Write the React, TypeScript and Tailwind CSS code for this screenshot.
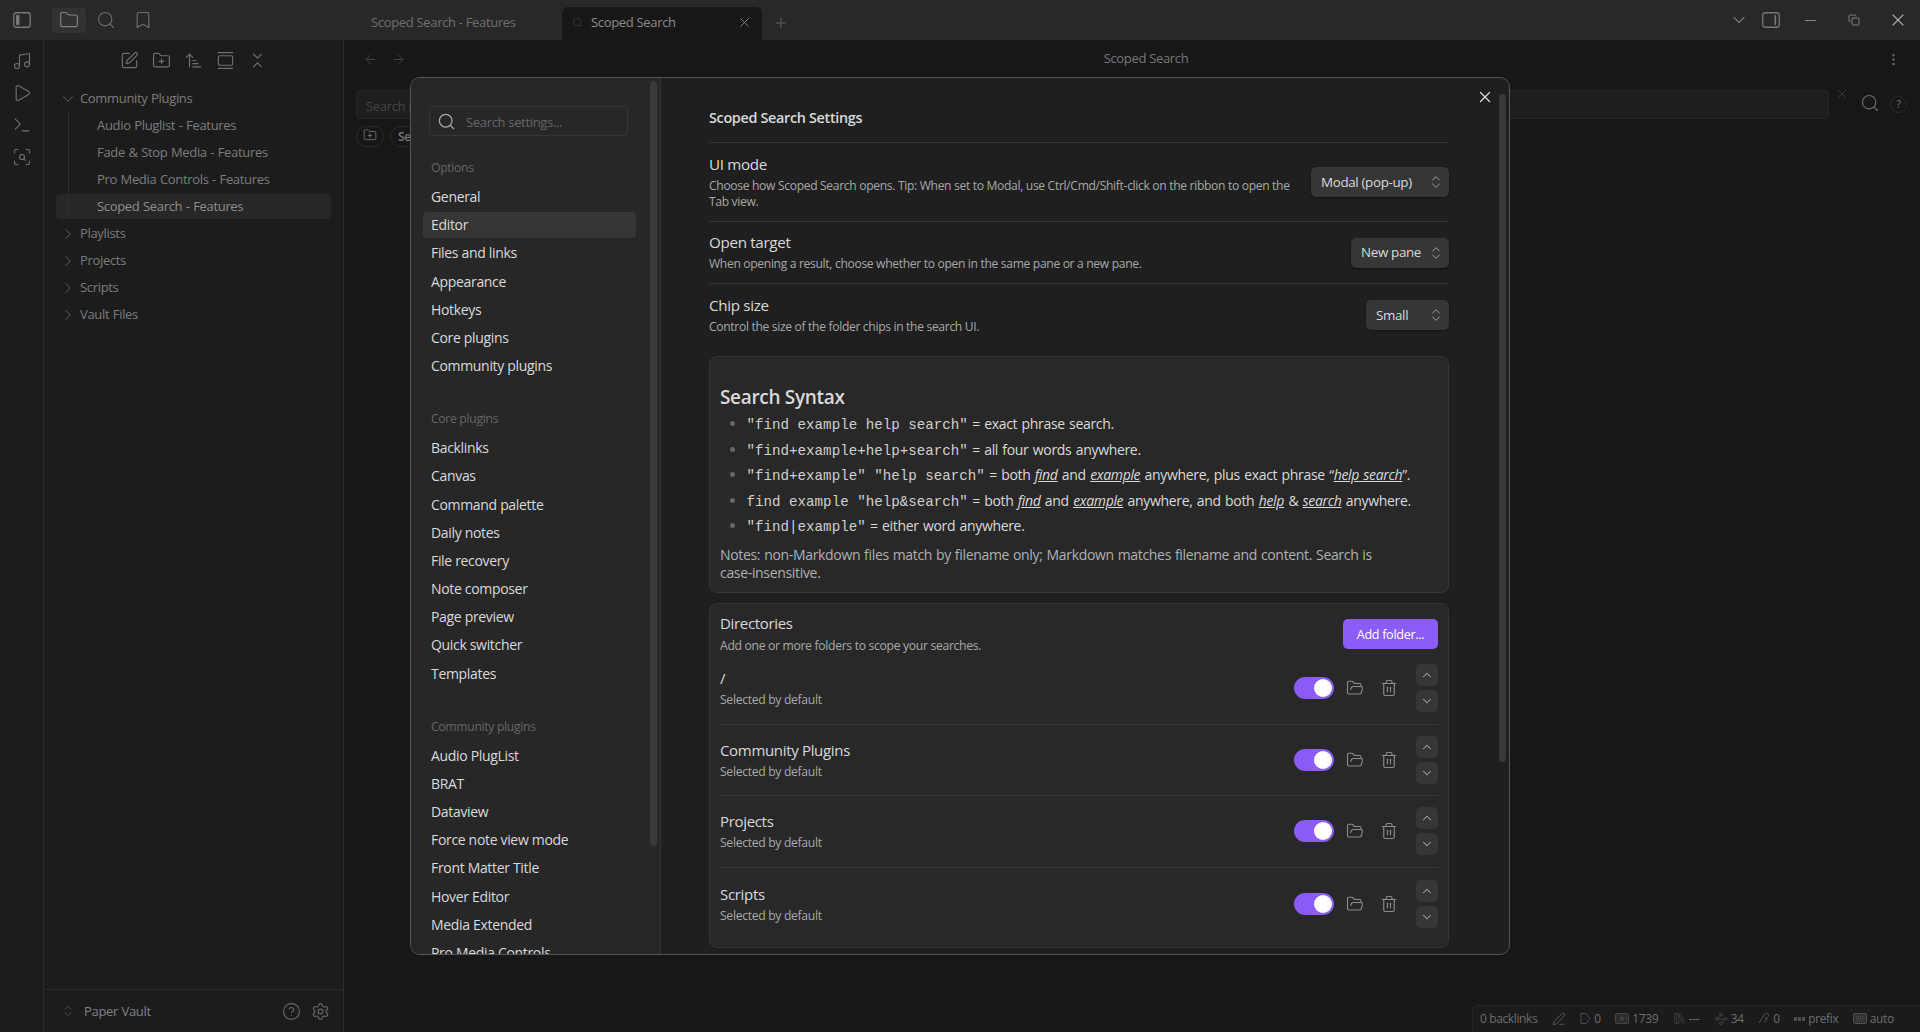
import {
  ArrowLeft,
  ArrowRight,
  ArrowUpNarrowWide,
  Bookmark,
  ChevronDown,
  ChevronRight,
  ChevronsDownUp,
  ChevronsUpDown,
  ChevronUp,
  CircleHelp,
  Copy,
  EllipsisVertical,
  Folder,
  FolderOpen,
  FolderPlus,
  GalleryVertical,
  LibraryBig,
  Minus,
  Music,
  PenLine,
  Play,
  Plus,
  ScanSearch,
  Search,
  Settings,
  SquarePen,
  Terminal,
  Trash2,
  Waypoints,
  X,
} from "lucide-react";

const optionItems = ["General", "Editor", "Files and links", "Appearance", "Hotkeys", "Core plugins", "Community plugins"];
const coreItems = ["Backlinks", "Canvas", "Command palette", "Daily notes", "File recovery", "Note composer", "Page preview", "Quick switcher", "Templates"];
const communityItems = ["Audio PlugList", "BRAT", "Dataview", "Force note view mode", "Front Matter Title", "Hover Editor", "Media Extended", "Pro Media Controls"];
const directories = ["/", "Community Plugins", "Projects", "Scripts"];

// obsidian's sidebar toggle, the filled bar is what lucide's version lacks
function SidebarToggle({ side }: { side: "left" | "right" }) {
  return (
    <svg width="18" height="16" viewBox="0 0 18 16" fill="none" className="text-[#777]">
      <rect x="0.75" y="0.75" width="16.5" height="14.5" rx="2.5" stroke="currentColor" strokeWidth="1.3" />
      {side === "left" ? <rect x="3" y="3" width="3.5" height="10" rx="0.8" fill="currentColor" /> : <rect x="12.5" y="3" width="1.6" height="10" rx="0.6" fill="currentColor" />}
    </svg>
  );
}

function NavGroup({ title, items }: { title: string; items: string[] }) {
  return (
    <div className="mb-[31px]">
      <div className="h-[25px] pl-[20px] text-[12.2px] leading-[18px] font-medium text-[#666]">{title}</div>
      <div className="flex flex-col gap-[2.2px]">
        {items.map((item) => (
          <div
            key={item}
            className={`ml-[12px] h-[26px] w-[213px] rounded-[4px] pl-[8px] text-[14px] leading-[26px] text-[#dadada] ${item === "Editor" ? "bg-[#363636]" : ""}`}
          >
            {item}
          </div>
        ))}
      </div>
    </div>
  );
}

function Dropdown({ label, className }: { label: string; className: string }) {
  return (
    <div className={`flex h-[30px] shrink-0 items-center justify-between rounded-[5px] bg-[#363636] pl-[10px] pr-[5px] text-[13.35px] text-[#dadada] shadow-[0_1px_2px_rgba(0,0,0,0.4)] ${className}`}>
      {label}
      <ChevronsUpDown size={16} strokeWidth={1.4} className="text-[#aaa]" />
    </div>
  );
}

function SettingRow({ name, desc, children, className }: { name: string; desc: string; children: React.ReactNode; className: string }) {
  return (
    <div className={`flex items-center justify-between ${className}`}>
      <div className="w-[590px]">
        <div className="text-[15.2px] leading-[20px] text-[#dadada]">{name}</div>
        <div className="mt-[4px] text-[12.1px] leading-[16.5px] text-[#a8a8a8]">{desc}</div>
      </div>
      {children}
    </div>
  );
}

function Code({ children }: { children: React.ReactNode }) {
  return <span className="font-['Liberation_Mono',monospace] text-[14.2px] tracking-normal [word-spacing:0] text-[#cfcfcf]">{children}</span>;
}

function Em({ children }: { children: React.ReactNode }) {
  return <em className="underline">{children}</em>;
}

function SyntaxItem({ children }: { children: React.ReactNode }) {
  return (
    <li className="flex h-[25.4px] items-center">
      <span className="ml-[9.5px] mr-[12px] mt-[-2px] size-[5px] shrink-0 rounded-full bg-[#666]" />
      <span className="whitespace-pre">{children}</span>
    </li>
  );
}

function DirectoryRow({ name, last }: { name: string; last?: boolean }) {
  return (
    <div className={`flex h-[71.6px] items-center justify-between ${last ? "" : "border-b border-[#383838]"}`}>
      <div>
        <div className="text-[15px] leading-[20px] text-[#dadada]">{name}</div>
        <div className="mt-[4px] text-[12.2px] leading-[16px] text-[#a8a8a8]">Selected by default</div>
      </div>
      <div className="flex items-center">
        <div className="relative mr-[12px] h-[22px] w-[40px] rounded-full bg-[#8b5cf6]">
          <div className="absolute right-[2px] top-[2px] size-[18px] rounded-full bg-white" />
        </div>
        <FolderOpen size={18} strokeWidth={1.5} className="mr-[16px] text-[#8c8c8c]" />
        <Trash2 size={18} strokeWidth={1.5} className="mr-[18px] text-[#8c8c8c]" />
        <div className="flex flex-col gap-[4px]">
          <div className="flex size-[22px] items-center justify-center rounded-[5px] bg-[#363636]">
            <ChevronUp size={14} strokeWidth={1.8} className="text-[#aaa]" />
          </div>
          <div className="flex size-[22px] items-center justify-center rounded-[5px] bg-[#363636]">
            <ChevronDown size={14} strokeWidth={1.8} className="text-[#aaa]" />
          </div>
        </div>
      </div>
    </div>
  );
}

function SettingsModal() {
  return (
    <div className="absolute left-[410px] top-[77px] flex h-[878px] w-[1100px] overflow-hidden rounded-[10px] border border-[#555] bg-[#1f1f1f]">
      {/* settings sidebar */}
      <div className="relative w-[250px] shrink-0 overflow-hidden border-r border-[#333] bg-[#272727]">
        <div className="absolute right-[3px] top-[3px] h-[765px] w-[7px] rounded-[4px] bg-[#3a3a3a]" />
        <div className="ml-[18px] mt-[28px] flex h-[30px] w-[199px] items-center rounded-[4px] border border-[#363636] pl-[7px] text-[13px] text-[#666]">
          <Search size={19} strokeWidth={1.6} className="mr-[10px] text-[#aaa]" />
          <span className="pt-[3px]">Search settings...</span>
        </div>
        <div className="mt-[23px]">
          <NavGroup title="Options" items={optionItems} />
          <NavGroup title="Core plugins" items={coreItems} />
          <NavGroup title="Community plugins" items={communityItems} />
        </div>
      </div>

      {/* settings content */}
      <div className="relative min-w-0 flex-1 overflow-hidden pl-[48px] pr-[60px]">
        <X size={18} strokeWidth={1.7} className="absolute right-[15px] top-[10px] text-[#dadada]" />
        <div className="absolute right-[3px] top-[16px] h-[668px] w-[7px] rounded-[4px] bg-[#383838]" />
        <div className="flex h-[65px] items-center border-b border-[#333] pt-[16px] text-[14.4px] font-semibold text-[#dadada]">Scoped Search Settings</div>
        <SettingRow
          className="h-[79px] border-b border-[#333]"
          name="UI mode"
          desc="Choose how Scoped Search opens. Tip: When set to Modal, use Ctrl/Cmd/Shift-click on the ribbon to open the Tab view."
        >
          <Dropdown label="Modal (pop-up)" className="w-[138px]" />
        </SettingRow>
        <SettingRow className="h-[62px] border-b border-[#333]" name="Open target" desc="When opening a result, choose whether to open in the same pane or a new pane.">
          <Dropdown label="New pane" className="w-[98px]" />
        </SettingRow>
        <SettingRow className="h-[62px]" name="Chip size" desc="Control the size of the folder chips in the search UI.">
          <Dropdown label="Small" className="w-[83px]" />
        </SettingRow>

        {/* search syntax card */}
        <div className="mt-[10px] h-[237px] rounded-[8px] border border-[#353535] bg-[#282828] px-[10px] pt-[27px]">
          <div className="text-[19px] font-semibold leading-[26px] text-[#dadada]">Search Syntax</div>
          <ul className="mt-[2.3px] text-[14px] [word-spacing:1px] text-[#dadada]">
            <SyntaxItem><Code>"find example help search"</Code> = exact phrase search.</SyntaxItem>
            <SyntaxItem><Code>"find+example+help+search"</Code> = all four words anywhere.</SyntaxItem>
            <SyntaxItem><Code>"find+example" "help search"</Code> = both <Em>find</Em> and <Em>example</Em> anywhere, plus exact phrase “<Em>help search</Em>”.</SyntaxItem>
            <SyntaxItem><Code>find example "help&search"</Code> = both <Em>find</Em> and <Em>example</Em> anywhere, and both <Em>help</Em> & <Em>search</Em> anywhere.</SyntaxItem>
            <SyntaxItem><Code>"find|example"</Code> = either word anywhere.</SyntaxItem>
          </ul>
          <p className="mt-[6.5px] text-[14px] leading-[18px] [word-spacing:0.6px] text-[#b0b0b0]">
            Notes: non-Markdown files match by filename only; Markdown matches filename and content. Search is
            <br />
            case-insensitive.
          </p>
        </div>

        {/* directories card */}
        <div className="mt-[10px] h-[345px] rounded-[8px] border border-[#353535] bg-[#282828] px-[10px] pt-[10px]">
          <div className="flex h-[39px] items-center justify-between">
            <div>
              <div className="text-[15px] leading-[20px] text-[#dadada]">Directories</div>
              <div className="mt-[5px] text-[12.2px] leading-[16px] text-[#a8a8a8]">Add one or more folders to scope your searches.</div>
            </div>
            <div className="flex h-[30px] w-[95px] items-center justify-center rounded-[5px] bg-[#8b5cf6] pt-[2px] text-[12.65px] text-white">Add folder...</div>
          </div>
          {directories.map((d, i) => (
            <DirectoryRow key={d} name={d} last={i === directories.length - 1} />
          ))}
        </div>
      </div>
    </div>
  );
}

function TreeFolder({ name, open }: { name: string; open?: boolean }) {
  return (
    <div className="flex h-[27px] items-center pl-[15px] text-[13px] text-[#7c7c7c]">
      {open ? <ChevronDown size={18} strokeWidth={1.4} className="mr-[3px] text-[#555]" /> : <ChevronRight size={18} strokeWidth={1.4} className="mr-[3px] text-[#555]" />}
      {name}
    </div>
  );
}

function Sidebar() {
  return (
    <aside className="flex w-[300px] shrink-0 flex-col border-r border-[#2b2b2b] bg-[#1c1c1c] [word-spacing:0.5px]">
      <div className="flex h-[41px] items-center gap-[13px] pl-[76px] text-[#6e6e6e]">
        <SquarePen size={19} strokeWidth={1.5} />
        <FolderPlus size={19} strokeWidth={1.5} />
        <ArrowUpNarrowWide size={19} strokeWidth={1.5} />
        <GalleryVertical size={19} strokeWidth={1.5} />
        <ChevronsDownUp size={19} strokeWidth={1.5} />
      </div>
      <div className="mt-[4px] flex-1">
        <TreeFolder name="Community Plugins" open />
        <div className="relative">
          <div className="absolute bottom-0 left-[24px] top-0 w-px bg-[#2e2e2e]" />
          {["Audio Pluglist - Features", "Fade & Stop Media - Features", "Pro Media Controls - Features"].map((n) => (
            <div key={n} className="flex h-[27px] items-center pl-[53px] text-[13px] text-[#7c7c7c]">{n}</div>
          ))}
          <div className="mx-[12px] mt-[1px] flex h-[25px] items-center rounded-[4px] bg-[#272727] pl-[41px] text-[13px] text-[#8e8e8e]">Scoped Search - Features</div>
        </div>
        <div className="mt-[1px]">
          <TreeFolder name="Playlists" />
          <TreeFolder name="Projects" />
          <TreeFolder name="Scripts" />
          <TreeFolder name="Vault Files" />
        </div>
      </div>
      <div className="flex h-[43px] items-center border-t border-[#2b2b2b] pl-[17px] pr-[13px] text-[13px] font-medium text-[#808080]">
        <ChevronsUpDown size={14} strokeWidth={1.5} className="mr-[9px] text-[#555]" />
        <span className="flex-1 pt-[1px]">Paper Vault</span>
        <CircleHelp size={19} strokeWidth={1.5} className="mr-[10px] text-[#666]" />
        <Settings size={19} strokeWidth={1.5} className="text-[#666]" />
      </div>
    </aside>
  );
}

function StatusItem({ icon, label }: { icon?: React.ReactNode; label?: string }) {
  return (
    <div className="flex items-center gap-[3px]">
      {icon}
      {label && <span>{label}</span>}
    </div>
  );
}

export default function App() {
  return (
    <div className="relative flex h-[1032px] w-[1920px] flex-col overflow-hidden bg-[#171717] font-['Open_Sans','Noto_Sans',sans-serif] text-[13px] tracking-[-0.025em]">
      {/* title bar */}
      <header className="flex h-[40px] shrink-0 items-end bg-[#282828]">
        <div className="flex h-[40px] w-[371px] items-center text-[#6e6e6e]">
          <div className="ml-[13px] flex"><SidebarToggle side="left" /></div>
          <div className="ml-[21px] flex h-[25px] w-[34px] items-center justify-center rounded-[4px] bg-[#323232]">
            <Folder size={20} strokeWidth={1.4} className="text-[#808080]" />
          </div>
          <Search size={20} strokeWidth={1.4} className="ml-[10px]" />
          <Bookmark size={20} strokeWidth={1.4} className="ml-[17px]" />
        </div>
        <div className="flex h-[33px] w-[191px] items-center pb-[2px] text-[#6f6f6f]">Scoped Search - Features</div>
        <div className="flex h-[33px] w-[200px] items-center rounded-t-[6px] bg-[#171717] pb-[2px] pl-[10px] pr-[10px] text-[#8c8c8c]">
          <Search size={11} strokeWidth={2} className="mr-[8px] text-[#333]" />
          <span className="flex-1">Scoped Search</span>
          <X size={15} strokeWidth={1.5} className="text-[#888]" />
        </div>
        <div className="flex h-[33px] w-[38px] items-center justify-center pb-[2px]">
          <Plus size={16} strokeWidth={1.6} className="text-[#5e5e5e]" />
        </div>
        <div className="flex h-[40px] flex-1 items-center justify-end text-[#777]">
          <ChevronDown size={20} strokeWidth={1.3} className="mr-[8px]" />
          <div className="mr-[3px] flex w-[28px] justify-center"><SidebarToggle side="right" /></div>
          <div className="flex w-[44px] justify-center"><Minus size={17} strokeWidth={1.2} className="text-[#999]" /></div>
          <div className="flex w-[44px] justify-center"><Copy size={12} strokeWidth={1.5} className="text-[#999]" /></div>
          <div className="flex w-[44px] justify-center"><X size={20} strokeWidth={1.3} className="text-[#aaa]" /></div>
        </div>
      </header>

      <div className="flex min-h-0 flex-1">
        {/* ribbon */}
        <div className="flex w-[44px] shrink-0 flex-col items-center gap-[12px] border-r border-[#2b2b2b] bg-[#1c1c1c] pt-[11px] text-[#6e6e6e]">
          <Music size={20} strokeWidth={1.4} />
          <Play size={20} strokeWidth={1.4} />
          <Terminal size={20} strokeWidth={1.4} />
          <ScanSearch size={20} strokeWidth={1.4} />
        </div>
        <Sidebar />

        {/* main view */}
        <main className="min-w-0 flex-1 bg-[#171717]">
          <div className="relative flex h-[38px] items-center pl-[19px] text-[#444]">
            <ArrowLeft size={15} strokeWidth={1.5} className="mr-[13px]" />
            <ArrowRight size={15} strokeWidth={1.5} />
            <div className="absolute left-[28px] right-0 text-center text-[#777]">Scoped Search</div>
            <EllipsisVertical size={15} strokeWidth={2} className="absolute right-[19px] text-[#666]" />
          </div>
          <div className="flex items-start pl-[12px] pt-[12px]">
            <div className="h-[29px] w-[1473px] rounded-[4px] border border-[#262626] bg-[#1e1e1e] pl-[9px] pt-[2px] leading-[27px] text-[#444]">Search in scope...</div>
            <X size={16} strokeWidth={1} className="ml-[5px] mt-[-4px] text-[#444]" />
            <Search size={20} strokeWidth={1.4} className="ml-[10px] mt-[3px] text-[#6e6e6e]" />
            <div className="ml-[10px] mt-[6px] flex size-[17px] items-center justify-center rounded-full border border-[#2b2b2b] text-[10px] font-semibold text-[#666]">?</div>
          </div>
          <div className="ml-[12px] mt-[7px] flex h-[21px] gap-[6px]">
            <div className="flex w-[28px] items-start justify-center rounded-full border border-[#2b2b2b] pt-[1px]">
              <FolderPlus size={14} strokeWidth={1.5} className="text-[#777]" />
            </div>
            <div className="w-[60px] rounded-full border border-[#2b2b2b] pl-[7px] text-[12px] font-semibold leading-[19px] text-[#777]">Search</div>
          </div>
        </main>
      </div>

      <SettingsModal />

      {/* status bar */}
      <div className="absolute bottom-0 right-0 flex h-[27px] w-[448px] items-center gap-[14.5px] rounded-tl-[6px] border-l border-t border-[#262626] bg-[#1b1b1b] pl-[7px] text-[11.9px] text-[#6e6e6e]">
        <StatusItem label="0 backlinks" />
        <PenLine size={14} strokeWidth={1.3} />
        <StatusItem
          icon={
            <svg width="11" height="13" viewBox="0 0 11 13" fill="none" stroke="#4e4e4e" strokeWidth="1">
              <path d="M1 1.5h5l4 5-4 5H1z" />
            </svg>
          }
          label="0"
        />
        <StatusItem
          icon={
            <svg width="14" height="11" viewBox="0 0 14 11" fill="#2e2e2e" stroke="#444" strokeWidth="1">
              <rect x="0.5" y="0.5" width="13" height="10" rx="1" />
              <circle cx="7" cy="5.5" r="2" fill="#444" stroke="none" />
            </svg>
          }
          label="1739"
        />
        <StatusItem icon={<LibraryBig size={13} strokeWidth={1.2} className="text-[#4e4e4e]" />} label="---" />
        <StatusItem icon={<Waypoints size={14} strokeWidth={1.2} className="text-[#4e4e4e]" />} label="34" />
        <StatusItem
          icon={
            <svg width="12" height="13" viewBox="0 0 12 13" fill="none" stroke="#4e4e4e" strokeWidth="1">
              <path d="M1 11l3-5 3-4.5c1-1 3.500-.5 3.500 1.500 0 2-1.500 2.500-2 4-.5 1.500-1 3.500-2.500 3.500" />
              <path d="M7 5l1 2" />
            </svg>
          }
          label="0"
        />
        <StatusItem
          icon={
            <svg width="11" height="4" viewBox="0 0 11 4" fill="#4e4e4e">
              <rect width="3" height="4" />
              <rect x="4" width="3" height="4" />
              <rect x="8" width="3" height="4" />
            </svg>
          }
          label="prefix"
        />
        <StatusItem
          icon={
            <svg width="14" height="11" viewBox="0 0 14 11" fill="#333" stroke="#4e4e4e" strokeWidth="1">
              <rect x="0.5" y="0.5" width="13" height="10" rx="1" />
              <path d="M3 3.500h8M3 5.500h8M4 7.500h6" strokeDasharray="1 1" />
            </svg>
          }
          label="auto"
        />
      </div>
    </div>
  );
}
